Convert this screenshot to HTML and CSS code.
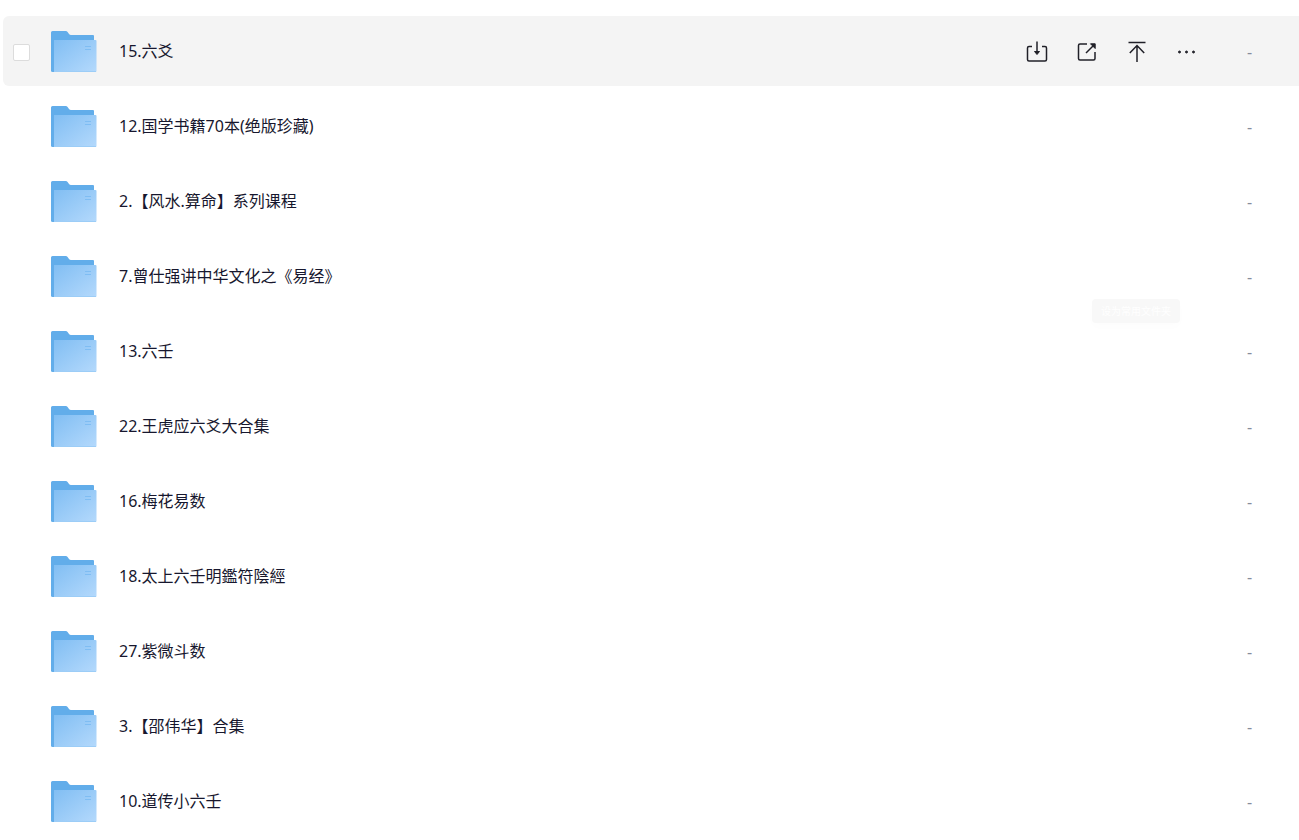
FILE: index.html
```
<!DOCTYPE html>
<html lang="zh-CN">
<head>
<meta charset="utf-8">
<title>文件列表</title>
<link rel="stylesheet" href="styles.css">
</head>
<body>
<svg class="defs" width="0" height="0" aria-hidden="true">
  <defs>
    <linearGradient id="front" x1="0" y1="0" x2="1" y2="1">
      <stop offset="0" stop-color="#81bef3"/>
      <stop offset="1" stop-color="#b4d9fc"/>
    </linearGradient>
    <symbol id="folder" viewBox="0 0 46 42">
      <path d="M0 1.5Q0 0 1.5 0H14.5Q16 0 16.8 1.2L18 3Q18.8 4 20 4H42Q43 4 43 5V40H1.5Q0 40 0 39Z" fill="#62adea"/>
      <path d="M0 10H4V41H1.5Q0 41 0 39.5Z" fill="#62adea"/>
      <path d="M3 9H44.5Q45.5 9 45.5 10V40Q45.5 41 44.5 41H3Z" fill="url(#front)"/>
      <path d="M3 40.5H45" stroke="#9ccdf7"/>
      <path d="M34 15.500H40M34 18.500H40" stroke="#7fbdf3"/>
    </symbol>
  </defs>
</svg>
<main class="files">
  <ul class="list">
    <li class="row active">
      <input class="check" type="checkbox" aria-label="选择 15.六爻">
      <svg class="folder" aria-hidden="true"><use href="#folder"/></svg>
      <span class="name">15.六爻</span>
      <div class="actions">
        <button class="action" type="button" aria-label="下载">
          <svg viewBox="0 0 24 24"><path d="M7 6.500H4Q2.500 6.500 2.500 8V19.500Q2.500 21 4 21H20Q21.500 21 21.500 19.500V8Q21.500 6.500 20 6.500H17M12 1.500V12"/><path class="solid" d="M9.500 11.500H14.500L12 14.500Z"/></svg>
        </button>
        <button class="action" type="button" aria-label="分享">
          <svg viewBox="0 0 24 24"><path d="M12 4H5Q3.500 4 3.500 5.500V18.500Q3.500 20 5 20H18.500Q20 20 20 18.500V12M11 13L19 5"/><path class="solid" d="M15.500 3.800H20.200V8.500Z"/></svg>
        </button>
        <button class="action" type="button" aria-label="置顶">
          <svg viewBox="0 0 24 24"><path d="M3.500 2.500H20.500M12 22V5.500M4.800 13L12 5.500L19.200 13"/></svg>
        </button>
        <button class="action" type="button" aria-label="更多">
          <svg viewBox="0 0 24 24"><g class="solid"><circle cx="4.500" cy="12" r="1"/><circle cx="11.500" cy="12" r="1"/><circle cx="18.500" cy="12" r="1"/></g></svg>
        </button>
      </div>
      <span class="size">-</span>
    </li>
    <li class="row"><svg class="folder" aria-hidden="true"><use href="#folder"/></svg><span class="name">12.国学书籍70本(绝版珍藏)</span><span class="size">-</span></li>
    <li class="row"><svg class="folder" aria-hidden="true"><use href="#folder"/></svg><span class="name">2.【风水.算命】系列课程</span><span class="size">-</span></li>
    <li class="row"><svg class="folder" aria-hidden="true"><use href="#folder"/></svg><span class="name">7.曾仕强讲中华文化之《易经》</span><span class="size">-</span></li>
    <li class="row"><svg class="folder" aria-hidden="true"><use href="#folder"/></svg><span class="name">13.六壬</span><span class="size">-</span></li>
    <li class="row"><svg class="folder" aria-hidden="true"><use href="#folder"/></svg><span class="name">22.王虎应六爻大合集</span><span class="size">-</span></li>
    <li class="row"><svg class="folder" aria-hidden="true"><use href="#folder"/></svg><span class="name">16.梅花易数</span><span class="size">-</span></li>
    <li class="row"><svg class="folder" aria-hidden="true"><use href="#folder"/></svg><span class="name">18.太上六壬明鑑符陰經</span><span class="size">-</span></li>
    <li class="row"><svg class="folder" aria-hidden="true"><use href="#folder"/></svg><span class="name">27.紫微斗数</span><span class="size">-</span></li>
    <li class="row"><svg class="folder" aria-hidden="true"><use href="#folder"/></svg><span class="name">3.【邵伟华】合集</span><span class="size">-</span></li>
    <li class="row"><svg class="folder" aria-hidden="true"><use href="#folder"/></svg><span class="name">10.道传小六壬</span><span class="size">-</span></li>
  </ul>
  <div class="tooltip" role="tooltip">设为常用文件夹</div>
</main>
</body>
</html>
```
FILE: styles.css
```
* {
  box-sizing: border-box;
}

body {
  margin: 0;
  background: #fff;
  color: #17172e;
  font-family: "Noto Sans", "Noto Sans CJK SC", sans-serif;
  font-size: 16px;
  line-height: 24px;
}

.defs {
  position: absolute;
}

.files {
  position: relative;
  padding: 16px 0 0 3px;
}

.list {
  display: flex;
  flex-direction: column;
  gap: 5px;
  margin: 0;
  padding: 0;
  list-style: none;
}

.row {
  display: flex;
  align-items: center;
  height: 70px;
  padding: 2px 0 0 48px;
  border-radius: 6px 0 0 6px;
}

.active {
  padding-left: 10px;
  background: #f4f4f4;
}

.check {
  appearance: none;
  flex: none;
  width: 17px;
  height: 17px;
  margin: 0 21px 0 0;
  border: 1px solid #dcdcdc;
  border-radius: 2px;
  background: #fff;
}

.folder {
  flex: none;
  width: 46px;
  height: 42px;
  margin-right: 22px;
}

.name {
  flex: 1;
  padding-bottom: 2px;
}

.actions {
  display: flex;
  gap: 26px;
  margin-right: 48px;
}

.action {
  display: flex;
  width: 24px;
  height: 24px;
  padding: 0;
  border: 0;
  background: none;
  cursor: pointer;
}

.action svg {
  width: 24px;
  height: 24px;
  fill: none;
  stroke: #202028;
  stroke-width: 1.5;
}

.action .solid {
  fill: #202028;
  stroke-width: 1;
}

.size {
  width: 52px;
  color: #878c9c;
}

.tooltip {
  position: absolute;
  top: 299px;
  right: 119px;
  width: 88px;
  border-radius: 4px;
  background: #f8f8f8;
  box-shadow: 0 4px 8px rgba(0, 0, 0, 0.01);
  color: #fff;
  font-size: 10px;
  line-height: 24px;
  text-align: center;
}
```
